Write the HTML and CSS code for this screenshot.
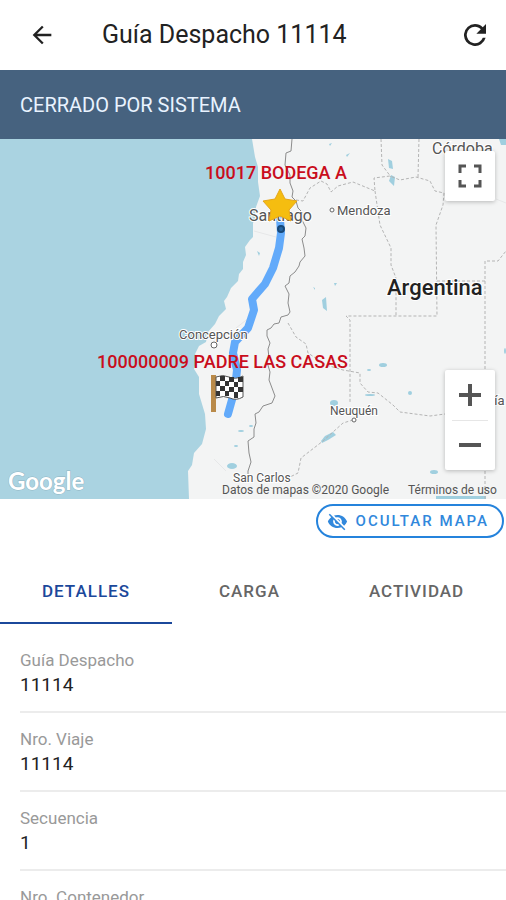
FILE: index.html
```html
<!DOCTYPE html>
<html lang="es">
<head>
<meta charset="utf-8">
<meta name="viewport" content="width=device-width, initial-scale=1">
<title>Guía Despacho 11114</title>
<link rel="stylesheet" href="styles.css">
</head>
<body>
<header class="toolbar">
  <button class="icon-button" type="button" aria-label="Volver">
    <svg class="icon" viewBox="0 0 24 24"><path d="M20 11H7.800l5.600-5.600L12 4l-8 8 8 8 1.400-1.400L7.800 13H20z"/></svg>
  </button>
  <h1 class="title">Guía Despacho 11114</h1>
  <button class="icon-button" type="button" aria-label="Actualizar">
    <svg class="icon icon-refresh" viewBox="4 4 16 16"><path d="M17.650 6.350A7.960 7.960 0 0 0 12 4a8 8 0 1 0 7.730 10h-2.080A6 6 0 1 1 12 6c1.660 0 3.140.69 4.220 1.780L13 11h7V4l-2.350 2.350z"/></svg>
  </button>
</header>
<main>
  <p class="status">CERRADO POR SISTEMA</p>
  <section class="map" aria-label="Mapa de la ruta">
    <svg class="map-canvas" viewBox="0 0 506 360" preserveAspectRatio="xMidYMid slice">
      <rect class="water" width="506" height="360"/>
      <path class="land" d="M252 0l3 18 3 10v15l2 14-4 11-1 12-2 4v14l-3 3-5 7 1 8-3 7v7l-4 5-1 7-7 7-4 9-3 4 2 8-7 7-4 8-7 8-2 10-7 4-4 8 2 5-3 10 5 8v17l6 20 1 15-4 15-8 9-2 12-4 6L189 360H506V0z"/>
      <g class="lake">
        <path d="M388 20l4 2 1 8-4-1zM391 36l4 2-1 9-5-5zM329 5l3-1-2 3zM346 16l4-2-3 4zM322 161l4-3 1 14-4-3zM313 148l2 1 0 2zM334 144l3 0-2 3zM257 112l3 2-1 3zM499 0h7v6h-5z"/>
        <ellipse cx="383" cy="226" rx="4" ry="2"/><ellipse cx="370" cy="256" rx="5" ry="1"/><ellipse cx="410" cy="254" rx="2" ry="2"/>
        <ellipse cx="369" cy="231" rx="2" ry="1"/><ellipse cx="334" cy="264" rx="4" ry="3"/><path d="M321 302l4-5 8-4 3 3-8 5-6 3z"/>
        <ellipse cx="241" cy="292" rx="3" ry="1"/><ellipse cx="236" cy="307" rx="2" ry="1"/><ellipse cx="232" cy="327" rx="5" ry="3"/><ellipse cx="251" cy="287" rx="2" ry="1"/><ellipse cx="434" cy="333" rx="4" ry="2"/><ellipse cx="505" cy="212" rx="1" ry="3"/><path d="M436 357h50v3h-50z"/>
      </g>
      <path class="road" d="M254 92l22 6M496 60l10 4M254 175l-18 14M214 320l12 12"/>
      <path class="border" d="M292 0l-1 12-5 2-1 12 5 10v8l3 8-1 6 4 4 2 7 5 5-1 7 4 8-1 8-3 3 2 9 1 8-5 6-1 4-4 6-5 4-1 7-4 3 4 8-1 9 2 9-2 3-7 2-2 6-5 1-3 4-4 2v6l3 7-2 6 1 9-2 4 3 10-1 8 3 8 3 8-3 7-9 3-4 6-4 2 1 9-2 6v8l-6 4 1 12 2 9-3 9v9"/>
      <path class="province" d="M296 61l7 1 7-13 11-7 6 3 4 8 7-6 15-4 22 9-1-13 16-2 10 4 16-3 14 4 5 10 9 2-1 12-7 20 1 91h-91l4 4v83M381 0l1 26 9 12M419 0l-1 38M375 52l5 34 11 23v17l5 13v38M437 142h48v-20h13l8-10M485 142v218M288 184l8 14 10 7 2 9 18 12 17 5 17 3v10l8 9 10 1 15 12 7 7 30 4 15-2M353 281l-10 3-20 18-22 17-3 15-8 4"/>
      <path class="route" d="M280 80l1 14-2 15-6 20-8 16-13 15 2 11-6 18-13 14-2 11 4 17-2 19-7 25"/>
      <g class="place">
        <text class="city" x="432" y="15">Córdoba</text>
        <text x="337" y="76">Mendoza</text>
        <text class="city" x="249" y="82">Santiago</text>
        <text x="179" y="200">Concepción</text>
        <text class="small" x="330" y="276">Neuquén</text>
        <text x="472" y="266">Bahía</text>
        <text class="small" x="233" y="343">San Carlos</text>
        <text class="country" x="387" y="156">Argentina</text>
      </g>
      <circle class="town" cx="332" cy="71" r="2"/>
      <circle class="town" cx="214" cy="206" r="3"/>
      <circle class="town" cx="354" cy="281" r="2"/>
      <circle class="stop" cx="281" cy="90" r="3"/>
      <path class="star" d="M280 50l5 10 12 2-8 9 2 11-11-5-11 5 2-11-8-9 12-2z"/>
      <g>
        <path class="pole" d="M211 236h5v37h-5z"/>
        <path class="flag" d="M216 238q7-3 13 0t14-1v21q-7 4-13 1t-14 0z"/>
        <path class="checks" d="M220 237h5v5h-5zM229 238h5v5h-5zM238 238h5v5h-5zM216 242h4v5h-4zM225 242h4v5h-4zM234 243h4v5h-4zM220 247h5v5h-5zM229 248h5v5h-5zM238 248h5v5h-5zM216 252h4v5h-4zM225 252h4v5h-4zM234 253h4v6h-4z"/>
      </g>
      <g class="marker">
        <text x="205" y="40">10017 BODEGA A</text>
        <text x="97" y="229">100000009 PADRE LAS CASAS</text>
      </g>
      <text class="brand" x="8" y="351">Google</text>
      <g class="credit">
        <text x="222" y="355">Datos de mapas ©2020 Google</text>
        <text x="408" y="355">Términos de uso</text>
      </g>
    </svg>
    <button class="map-button fullscreen" type="button" aria-label="Pantalla completa">
      <svg class="control-icon" viewBox="0 0 24 24"><path d="M2 9V2h6M16 2h6v7M22 16v6h-6M8 22H2v-6" fill="none" stroke="currentColor" stroke-width="3"/></svg>
    </button>
    <div class="zoom">
      <button class="map-button" type="button" aria-label="Acercar"><svg class="control-icon" viewBox="0 0 24 24"><path d="M1 10h9V1h4v9h9v4h-9v9h-4v-9H1z"/></svg></button>
      <button class="map-button" type="button" aria-label="Alejar"><svg class="control-icon" viewBox="0 0 24 24"><path d="M1 10h22v4H1z"/></svg></button>
    </div>
  </section>
  <div class="map-actions">
    <button class="outline-button" type="button">
      <svg class="eye" viewBox="0 0 24 24"><path d="M12 7c2.760 0 5 2.240 5 5 0 .65-.13 1.260-.36 1.830l2.920 2.920c1.510-1.260 2.700-2.890 3.430-4.750-1.730-4.390-6-7.500-11-7.500-1.400 0-2.740.25-3.980.7l2.160 2.160C10.740 7.130 11.350 7 12 7zM2 4.270l2.280 2.280.46.46C3.080 8.300 1.780 10.020 1 12c1.730 4.390 6 7.500 11 7.500 1.550 0 3.030-.3 4.380-.84l.42.42L19.730 22 21 20.730 3.270 3 2 4.270zM7.530 9.800l1.550 1.550c-.05.21-.08.43-.08.65 0 1.660 1.340 3 3 3 .22 0 .44-.03.65-.08l1.550 1.550c-.67.33-1.410.53-2.200.53-2.760 0-5-2.240-5-5 0-.79.2-1.530.53-2.200zm4.310-.78l3.150 3.150.02-.16c0-1.660-1.340-3-3-3l-.17.01z"/></svg>
      OCULTAR MAPA
    </button>
  </div>
  <nav class="tabs" role="tablist">
    <button class="tab tab-active" type="button" role="tab" aria-selected="true">DETALLES</button>
    <button class="tab" type="button" role="tab" aria-selected="false">CARGA</button>
    <button class="tab" type="button" role="tab" aria-selected="false">ACTIVIDAD</button>
  </nav>
  <dl class="details">
    <div class="row"><dt>Guía Despacho</dt><dd>11114</dd></div>
    <div class="row"><dt>Nro. Viaje</dt><dd>11114</dd></div>
    <div class="row"><dt>Secuencia</dt><dd>1</dd></div>
    <div class="row"><dt>Nro. Contenedor</dt><dd></dd></div>
  </dl>
</main>
</body>
</html>
```
FILE: styles.css
```css
* { box-sizing: border-box; }
body {
  margin: 0;
  height: 100vh;
  overflow: hidden;
  background: #fff;
  color: #222;
  font-family: Roboto, "Liberation Sans", sans-serif;
}
button {
  margin: 0;
  padding: 0;
  border: 0;
  background: none;
  color: inherit;
  font: inherit;
}
svg { display: block; fill: currentColor; }

.toolbar {
  display: flex;
  align-items: center;
  height: 70px;
  padding: 0 20px;
}
.icon-button {
  display: flex;
  align-items: center;
  justify-content: center;
  width: 44px;
  height: 44px;
}
.icon-button:last-child { justify-content: flex-end; }
.icon { width: 28px; height: 28px; }
.icon-refresh { width: 22px; height: 22px; }
.title {
  flex: 1;
  margin: 0 0 0 38px;
  font-size: 25px;
  font-weight: 400;
  line-height: 32px;
}

.status {
  margin: 0;
  padding: 23px 20px 22px;
  background: #46627f;
  color: #e9f3ff;
  font-size: 20px;
  line-height: 24px;
}

.map { position: relative; height: 360px; overflow: hidden; }
.map-canvas { width: 100%; height: 100%; }
.water { fill: #aad3e1; }
.land { fill: #f3f4f4; }
.lake { fill: #a0cfdf; }
.road { fill: none; stroke: #e6e7e8; }
.border { fill: none; stroke: #8c8c8c; stroke-linejoin: round; }
.province { fill: none; stroke: #b4b4b4; stroke-dasharray: 3 2; }
.place text {
  fill: #555;
  stroke: #fff;
  stroke-width: 2px;
  paint-order: stroke;
  font-size: 13px;
}
.place .small { font-size: 12px; }
.place .city { font-size: 16px; }
.place .country { fill: #222; font-size: 22px; font-weight: 500; }
.town { fill: #fff; stroke: #666; }
.route { fill: none; stroke: #62aafa; stroke-width: 8px; stroke-linecap: round; stroke-linejoin: round; }
.stop { fill: #2466a5; stroke: #174879; stroke-width: 2px; }
.star { fill: #f5bd10; stroke: #e5a51b; stroke-linejoin: round; }
.pole { fill: #b98a49; }
.flag { fill: #fff; stroke: #555; }
.checks { fill: #333; }
.marker { fill: #c90d1c; font-size: 18px; font-weight: 500; }
.brand {
  fill: #fff;
  stroke: #8fb4c2;
  stroke-width: 1px;
  paint-order: stroke;
  font-family: Lato, sans-serif;
  font-size: 24px;
  font-weight: 700;
}
.credit { fill: #555; font-size: 12px; }

.map-button {
  display: flex;
  align-items: center;
  justify-content: center;
  width: 50px;
  height: 50px;
  color: #555;
}
.control-icon { width: 24px; height: 24px; }
.fullscreen, .zoom {
  position: absolute;
  right: 11px;
  border-radius: 2px;
  background: #fff;
  box-shadow: 0 1px 4px rgba(0, 0, 0, 0.25);
}
.fullscreen { top: 12px; }
.zoom { bottom: 29px; }
.zoom .map-button + .map-button {
  background: linear-gradient(#e6e6e6, #e6e6e6) center top / 36px 1px no-repeat;
}

.map-actions { display: flex; justify-content: flex-end; padding: 5px 2px 20px; }
.outline-button {
  display: flex;
  align-items: center;
  gap: 8px;
  height: 34px;
  padding: 0 13px 0 9px;
  border: 2px solid #2583dc;
  border-radius: 17px;
  color: #3188dc;
  font-size: 15px;
  font-weight: 500;
  letter-spacing: 2px;
}
.eye { width: 21px; height: 21px; }

.tabs { display: flex; gap: 5px; overflow: hidden; }
.tab {
  flex: none;
  height: 66px;
  padding: 2px 42px 0;
  border-bottom: 2px solid transparent;
  color: #666;
  font-size: 17px;
  font-weight: 500;
  letter-spacing: 1px;
}
.tab-active { border-color: #1b489b; color: #1b489b; }

.details { margin: 10px 0 0 20px; }
.row {
  height: 79px;
  padding: 14px 0 0;
  border-bottom: 2px solid #ececec;
}
.row dt { color: #999; font-size: 17px; line-height: 24px; }
.row dd { margin: 0; font-size: 19px; line-height: 26px; }
```
